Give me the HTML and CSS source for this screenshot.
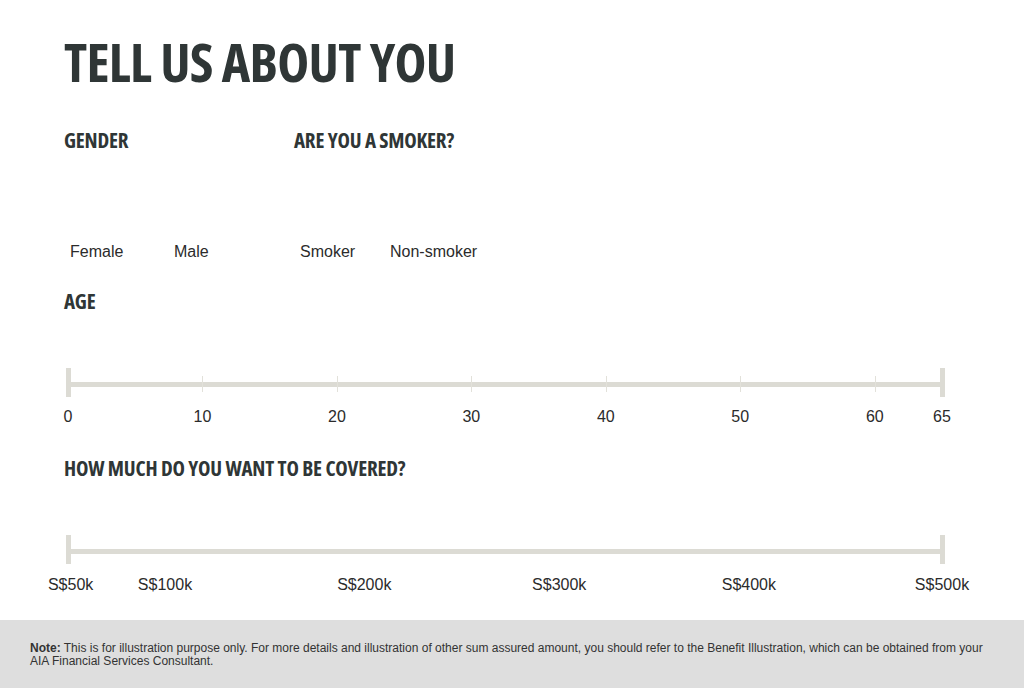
FILE: index.html
```html
<!DOCTYPE html>
<html lang="en">
<head>
<meta charset="utf-8">
<title>Tell us about you</title>
<link rel="stylesheet" href="styles.css">
</head>
<body>
<main class="page">
  <h1 class="title">TELL US ABOUT YOU</h1>
  <div class="choices">
    <section class="group group-gender">
      <h2 class="heading">GENDER</h2>
      <div class="options">
        <span class="opt opt-female">Female</span>
        <span class="opt opt-male">Male</span>
      </div>
    </section>
    <section class="group group-smoker">
      <h2 class="heading">ARE YOU A SMOKER?</h2>
      <div class="options">
        <span class="opt opt-smoker">Smoker</span>
        <span class="opt opt-non">Non-smoker</span>
      </div>
    </section>
  </div>

  <section class="range range-age">
    <h2 class="heading">AGE</h2>
    <div class="scale">
      <div class="track"></div>
      <span class="cap cap-start"></span>
      <span class="cap cap-end"></span>
      <span class="tick" style="left:15.38%"></span>
      <span class="tick" style="left:30.77%"></span>
      <span class="tick" style="left:46.15%"></span>
      <span class="tick" style="left:61.54%"></span>
      <span class="tick" style="left:76.92%"></span>
      <span class="tick" style="left:92.31%"></span>
      <span class="mark" style="left:0%">0</span>
      <span class="mark" style="left:15.38%">10</span>
      <span class="mark" style="left:30.77%">20</span>
      <span class="mark" style="left:46.15%">30</span>
      <span class="mark" style="left:61.54%">40</span>
      <span class="mark" style="left:76.92%">50</span>
      <span class="mark" style="left:92.31%">60</span>
      <span class="mark" style="left:100%">65</span>
    </div>
  </section>

  <section class="range range-cover">
    <h2 class="heading">HOW MUCH DO YOU WANT TO BE COVERED?</h2>
    <div class="scale">
      <div class="track"></div>
      <span class="cap cap-start"></span>
      <span class="cap cap-end"></span>
      <span class="mark" style="left:0.3%">S$50k</span>
      <span class="mark" style="left:11.1%">S$100k</span>
      <span class="mark" style="left:33.9%">S$200k</span>
      <span class="mark" style="left:56.2%">S$300k</span>
      <span class="mark" style="left:77.9%">S$400k</span>
      <span class="mark" style="left:100%">S$500k</span>
    </div>
  </section>
</main>
<footer class="note">
  <p><strong>Note:</strong> This is for illustration purpose only. For more details and illustration of other sum assured amount, you should refer to the Benefit Illustration, which can be obtained from your AIA Financial Services Consultant.</p>
</footer>
</body>
</html>
```

FILE: styles.css
```css
* { box-sizing: border-box; }
html, body { margin: 0; padding: 0; background: #fff; }
body {
  font-family: "Liberation Sans", Arial, sans-serif;
  color: #2f3535;
  width: 1024px;
  height: 688px;
  overflow: hidden;
}
.page {
  height: 620px;
  padding: 34px 0 0 64px;
}
.title,
.heading {
  font-family: "Open Sans", "DejaVu Sans Condensed", sans-serif;
  font-stretch: 75%;
  font-weight: 700;
  color: #2f3636;
  margin: 0;
  line-height: 1;
}
.title {
  font-size: 54px;
  letter-spacing: -0.7px;
}
.heading {
  font-size: 21px;
  letter-spacing: -0.2px;
}
.choices {
  display: flex;
  margin-top: 42px;
}
.group-gender { width: 230px; }
.options {
  display: flex;
  margin-top: 92px;
  padding-left: 6px;
  font-size: 16px;
  line-height: 18px;
  color: #2b2b2b;
}
.opt-female { width: 104px; }
.opt-smoker { width: 90px; }

.range-age { margin-top: 30px; }
.range-cover { margin-top: 36px; }
.scale {
  position: relative;
  width: 874px;
  margin-left: 4px;
  height: 110px;
  padding-top: 70px;
}
.track {
  height: 5px;
  background: #dcdbd4;
}
.cap {
  position: absolute;
  top: 56px;
  width: 5px;
  height: 29px;
  background: #dcdbd4;
}
.cap-start { left: -2px; }
.cap-end { right: -3px; }
.tick {
  position: absolute;
  top: 64px;
  width: 1px;
  height: 16px;
  background: #e2e1da;
}
.mark {
  position: absolute;
  top: 96px;
  transform: translateX(-50%);
  font-size: 16px;
  line-height: 18px;
  color: #2b2b2b;
  white-space: nowrap;
}
.range-cover .mark { top: 97px; }
.note {
  height: 68px;
  background: #dedede;
  padding: 22px 30px 0 30px;
}
.note p {
  margin: 0;
  font-size: 12px;
  line-height: 13px;
  color: #333;
}
.note strong { font-weight: 700; }
```
